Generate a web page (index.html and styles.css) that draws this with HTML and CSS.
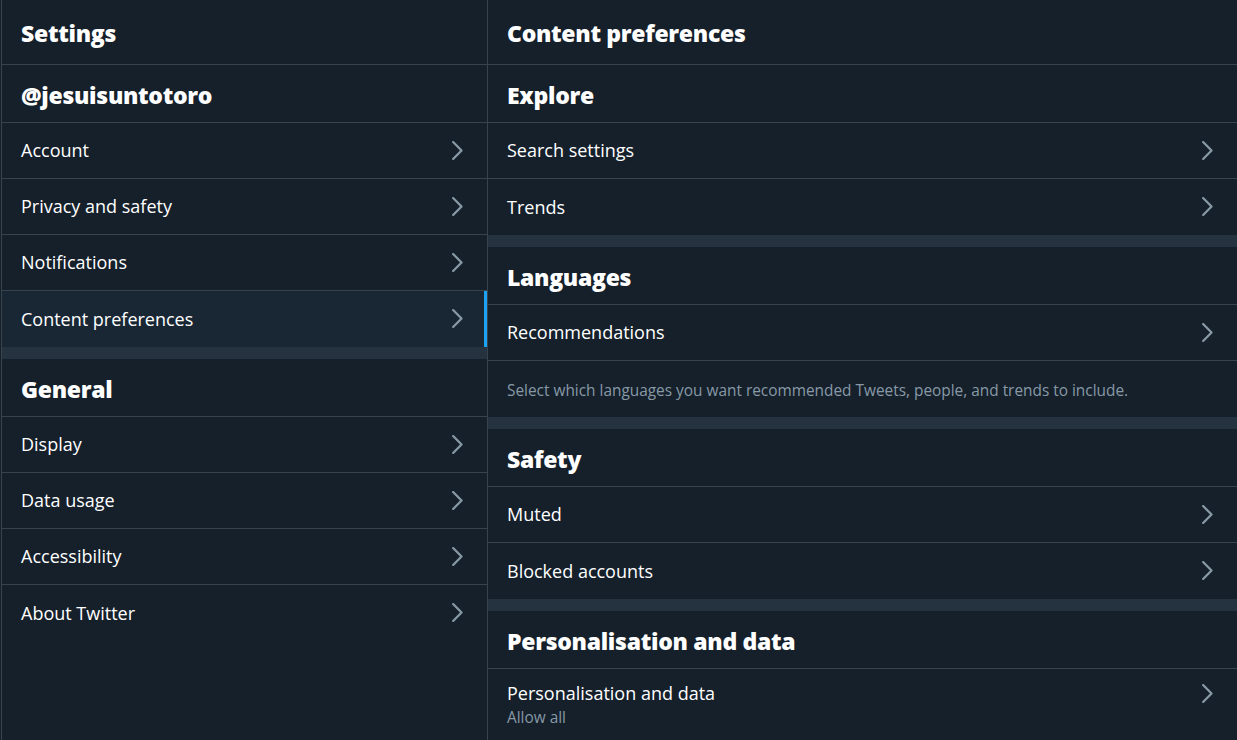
FILE: index.html
```html
<!DOCTYPE html>
<html lang="en">
<head>
<meta charset="utf-8">
<title>Settings</title>
<link rel="stylesheet" href="styles.css">
</head>
<body>
<svg class="defs" width="0" height="0" aria-hidden="true">
  <symbol id="chev" viewBox="0 0 24 24"><path d="M17.207 11.293l-7.5-7.5c-.39-.39-1.023-.39-1.414 0s-.39 1.023 0 1.414L15.086 12l-6.793 6.793c-.39.39-.39 1.023 0 1.414.195.195.45.293.707.293s.512-.098.707-.293l7.5-7.5c.39-.39.39-1.023 0-1.414z"/></symbol>
</svg>
<div class="app">
  <nav class="col col-left">
    <header class="top">Settings</header>
    <div class="heading">@jesuisuntotoro</div>
    <a class="item"><span>Account</span><svg class="chev"><use href="#chev"/></svg></a>
    <a class="item"><span>Privacy and safety</span><svg class="chev"><use href="#chev"/></svg></a>
    <a class="item"><span>Notifications</span><svg class="chev"><use href="#chev"/></svg></a>
    <a class="item active last"><span>Content preferences</span><svg class="chev"><use href="#chev"/></svg></a>
    <div class="sep"></div>
    <div class="heading">General</div>
    <a class="item"><span>Display</span><svg class="chev"><use href="#chev"/></svg></a>
    <a class="item"><span>Data usage</span><svg class="chev"><use href="#chev"/></svg></a>
    <a class="item"><span>Accessibility</span><svg class="chev"><use href="#chev"/></svg></a>
    <a class="item last"><span>About Twitter</span><svg class="chev"><use href="#chev"/></svg></a>
  </nav>
  <main class="col col-right">
    <header class="top">Content preferences</header>
    <div class="heading">Explore</div>
    <a class="item"><span>Search settings</span><svg class="chev"><use href="#chev"/></svg></a>
    <a class="item last"><span>Trends</span><svg class="chev"><use href="#chev"/></svg></a>
    <div class="sep"></div>
    <div class="heading">Languages</div>
    <a class="item"><span>Recommendations</span><svg class="chev"><use href="#chev"/></svg></a>
    <p class="desc">Select which languages you want recommended Tweets, people, and trends to include.</p>
    <div class="sep"></div>
    <div class="heading">Safety</div>
    <a class="item"><span>Muted</span><svg class="chev"><use href="#chev"/></svg></a>
    <a class="item last"><span>Blocked accounts</span><svg class="chev"><use href="#chev"/></svg></a>
    <div class="sep"></div>
    <div class="heading">Personalisation and data</div>
    <a class="item tall last"><span class="stack"><span>Personalisation and data</span><span class="sub">Allow all</span></span><svg class="chev"><use href="#chev"/></svg></a>
  </main>
</div>
</body>
</html>
```

FILE: styles.css
```css
html, body {
  margin: 0;
  padding: 0;
  height: 100%;
  overflow: hidden;
  background: #15202b;
}
body {
  font-family: "Open Sans", "Noto Sans", sans-serif;
  color: #ffffff;
}
.defs { position: absolute; }
.app {
  display: flex;
  height: 740px;
}
.col {
  display: flex;
  flex-direction: column;
}
.col-left {
  margin-left: 1px;
  width: 485px;
  border-left: 1px solid #38444d;
  border-right: 1px solid #38444d;
}
.col-right {
  flex: 1;
}
.top {
  height: 65px;
  flex: none;
  box-sizing: border-box;
  display: flex;
  align-items: center;
  padding: 1px 19px 0;
  border-bottom: 1px solid #38444d;
  font-size: 23px;
  font-weight: 800;
  letter-spacing: -0.3px;
}
.heading {
  height: 58px;
  flex: none;
  display: flex;
  align-items: center;
  padding: 2px 19px 0;
  box-sizing: border-box;
  border-bottom: 1px solid #38444d;
  font-size: 23px;
  font-weight: 800;
  letter-spacing: -0.3px;
}
.item {
  height: 56px;
  flex: none;
  box-sizing: border-box;
  display: flex;
  align-items: center;
  justify-content: space-between;
  padding: 0 17px 1px 19px;
  border-bottom: 1px solid #38444d;
  font-size: 18px;
  color: #ffffff;
}
.item.last { border-bottom: none; }
.item.active {
  background: #192734;
  box-shadow: inset -3px 0 0 #1da1f2;
}
.chev {
  width: 27px;
  height: 27px;
  fill: #8899a6;
  flex: none;
}
.sep {
  height: 12px;
  flex: none;
  background: #253341;
}
.desc {
  margin: 0;
  height: 56px;
  flex: none;
  box-sizing: border-box;
  display: flex;
  align-items: center;
  padding: 3px 19px 0;
  font-size: 15.4px;
  color: #8899a6;
}
.item.tall {
  height: auto;
  padding-top: 12px;
  padding-bottom: 12px;
  align-items: flex-start;
}
.item.tall .chev { margin-top: -1px; }
.stack {
  display: flex;
  flex-direction: column;
}
.sub {
  font-size: 15.4px;
  color: #8899a6;
  margin-top: 2px;
}
```
